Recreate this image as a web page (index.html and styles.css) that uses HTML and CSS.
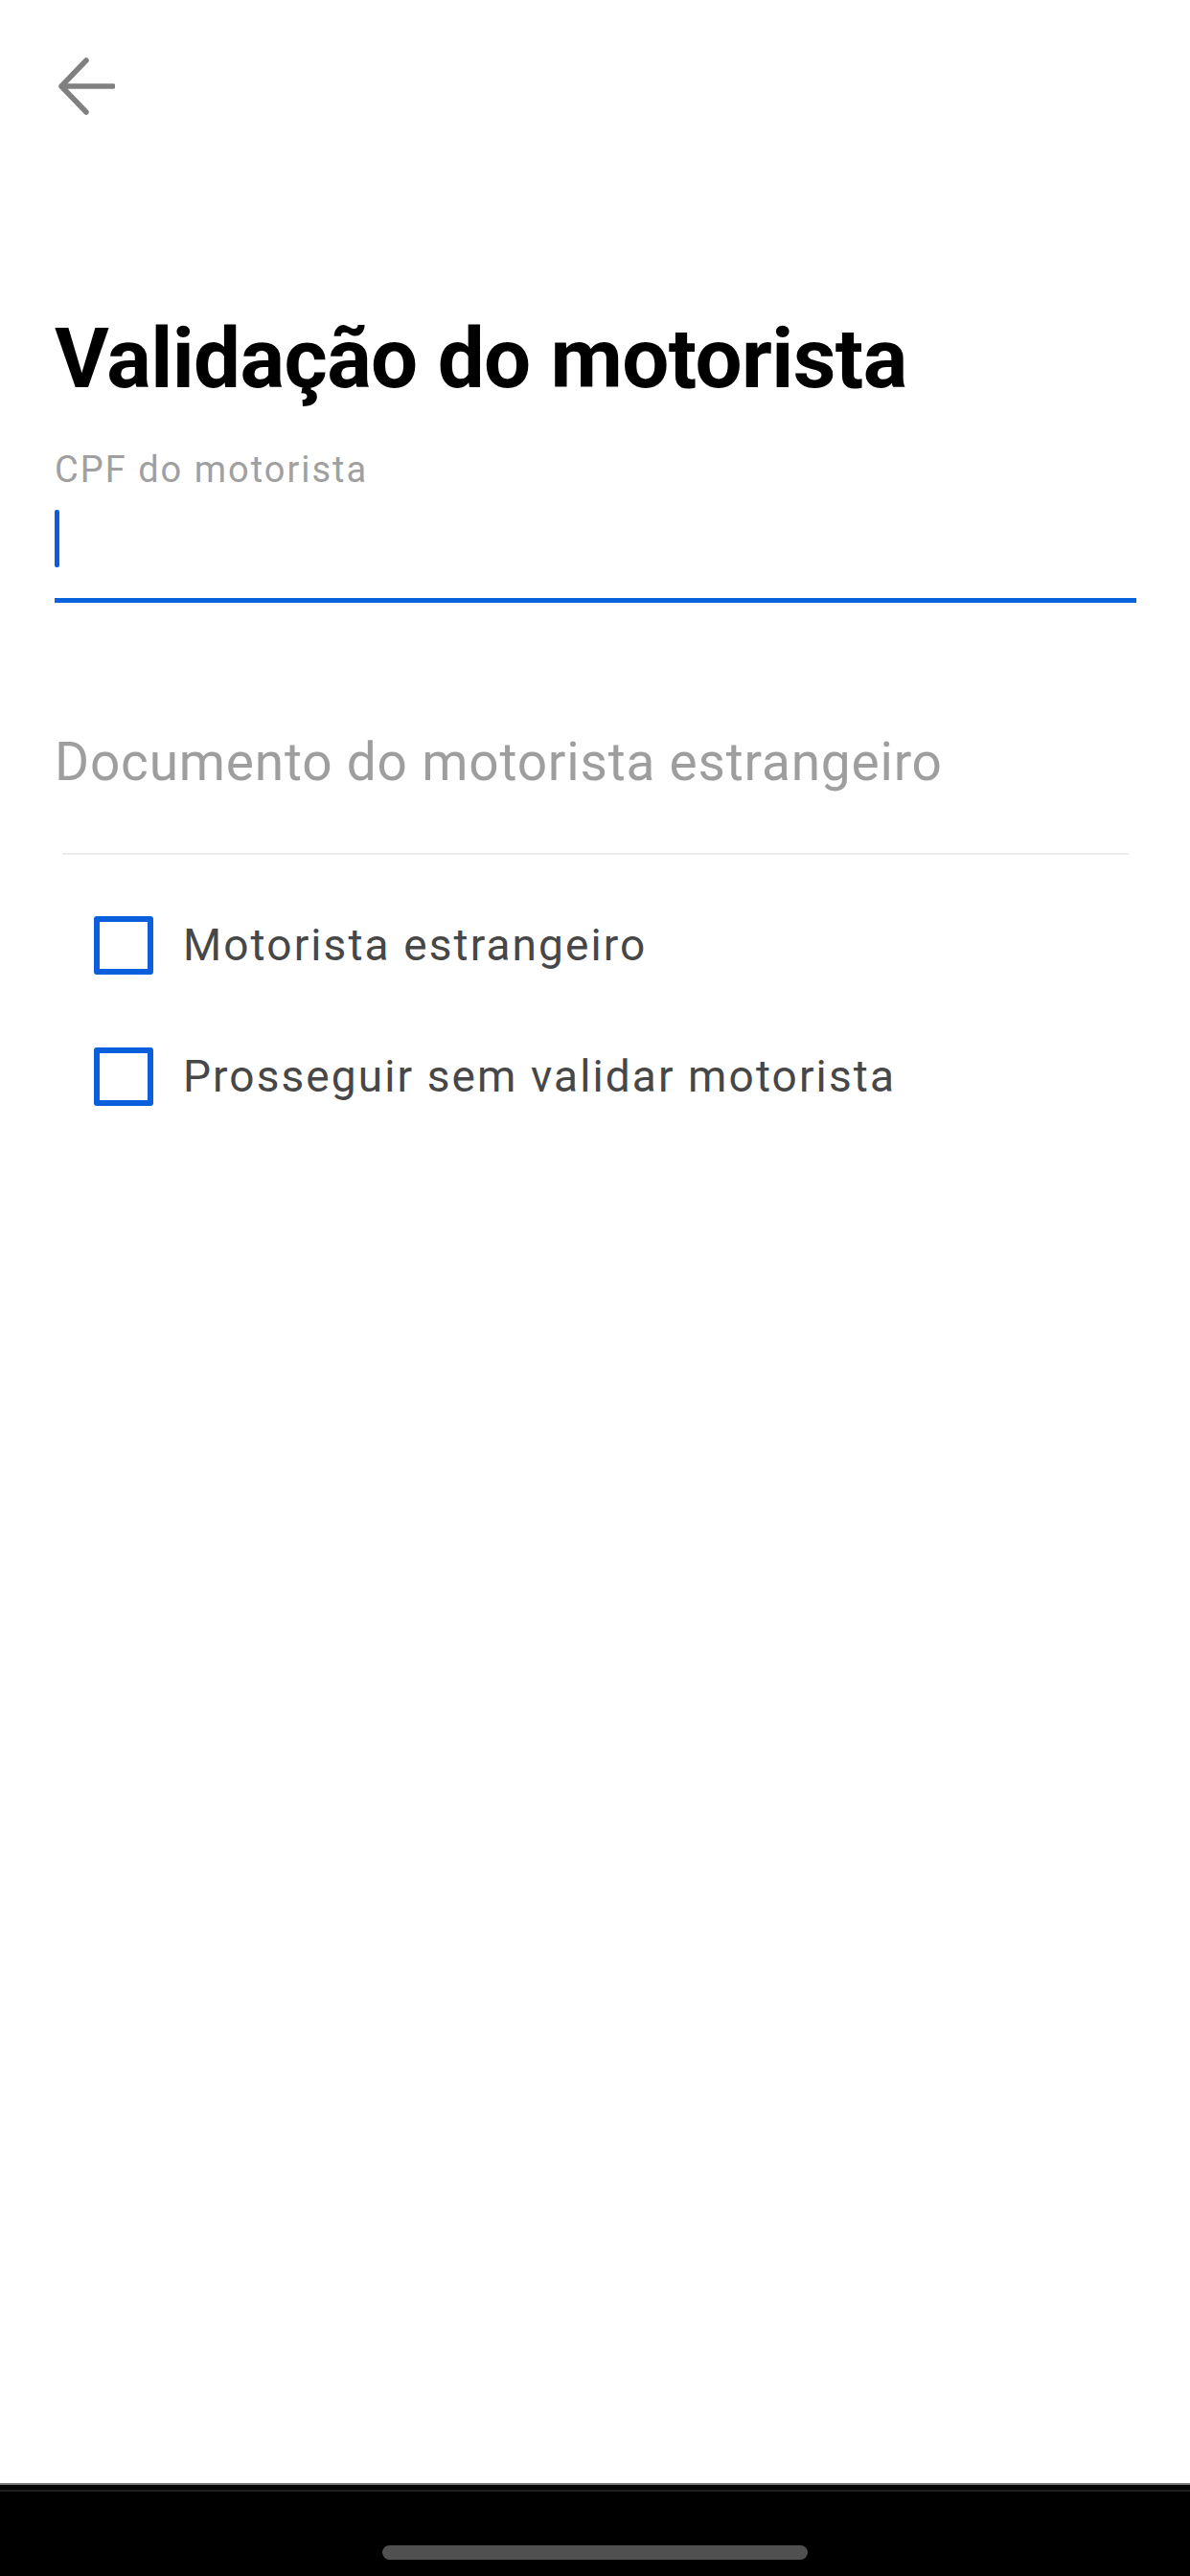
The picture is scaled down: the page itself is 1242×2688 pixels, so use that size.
FILE: index.html
```html
<!DOCTYPE html>
<html lang="pt-BR">
<head>
<meta charset="utf-8">
<title>Validação do motorista</title>
<link rel="stylesheet" href="styles.css">
</head>
<body>
<div class="screen">
  <header class="appbar">
    <button class="back" aria-label="Voltar">
      <svg viewBox="0 0 60 60" width="60" height="60" aria-hidden="true">
        <path d="M58 30H4M30 3L4 30l26 27" fill="none" stroke="#808080" stroke-width="5.5" stroke-linecap="round" stroke-linejoin="round"/>
      </svg>
    </button>
  </header>
  <main class="content">
    <h1 class="title">Validação do motorista</h1>
    <div class="field field-active">
      <label class="field-label">CPF do motorista</label>
      <div class="field-input"><span class="caret"></span></div>
    </div>
    <div class="field-plain">Documento do motorista estrangeiro</div>
    <div class="divider"></div>
    <div class="checks">
      <label class="check-row"><span class="box"></span><span class="check-text">Motorista estrangeiro</span></label>
      <label class="check-row"><span class="box"></span><span class="check-text">Prosseguir sem validar motorista</span></label>
    </div>
  </main>
  <footer class="navbar"><span class="pill"></span></footer>
</div>
</body>
</html>
```
FILE: styles.css
```css
html, body {
  margin: 0;
  padding: 0;
  background: #ffffff;
}
body {
  font-family: Roboto, "Noto Sans", "Liberation Sans", sans-serif;
}
.screen {
  width: 1242px;
  height: 2688px;
  display: flex;
  flex-direction: column;
  background: #ffffff;
}
.appbar {
  height: 180px;
  display: flex;
  align-items: flex-start;
  padding: 60px 0 0 60px;
  box-sizing: border-box;
}
.back {
  width: 62px;
  height: 60px;
  padding: 0;
  margin: 0;
  border: 0;
  background: transparent;
  display: flex;
}
.content {
  flex: 1;
  padding: 0 56px 0 57px;
  display: flex;
  flex-direction: column;
}
.title {
  margin: 142px 0 0;
  font-size: 87px;
  line-height: 1.2;
  font-weight: 700;
  color: #000000;
  letter-spacing: -0.6px;
}
.field {
  margin-top: 42px;
  display: flex;
  flex-direction: column;
}
.field-label {
  font-size: 38px;
  line-height: 1.2;
  color: #a0a0a0;
  letter-spacing: 2px;
}
.field-input {
  height: 110px;
  border-bottom: 5px solid #0a62dc;
  display: flex;
  align-items: flex-start;
}
.caret {
  width: 5px;
  height: 60px;
  margin-top: 18px;
  background: #0a5ed8;
  border-radius: 2px;
}
.field-plain {
  margin-top: 133px;
  font-size: 55px;
  line-height: 1.2;
  color: #9e9e9e;
  letter-spacing: 0.8px;
}
.divider {
  margin: 62px 8px 0;
  height: 2px;
  background: #ececec;
}
.checks {
  margin-top: 64px;
  padding-left: 41px;
  display: flex;
  flex-direction: column;
  gap: 76px;
}
.check-row {
  display: flex;
  align-items: center;
  gap: 31px;
  height: 61px;
}
.box {
  width: 62px;
  height: 61px;
  box-sizing: border-box;
  border: 6px solid #0a5fdc;
  border-radius: 3px;
  flex: none;
}
.check-text {
  font-size: 46px;
  line-height: 1.2;
  color: #474747;
  letter-spacing: 2.1px;
}
.navbar {
  height: 97px;
  background: linear-gradient(#000000 0 5px, #1e1e1e 5px 7px, #000000 7px);
  border-top: 2px solid #7a7a7a;
  box-sizing: border-box;
  display: flex;
  justify-content: center;
  align-items: flex-start;
  padding-top: 63px;
}
.pill {
  width: 444px;
  height: 15px;
  border-radius: 8px;
  background: #505050;
}
```
